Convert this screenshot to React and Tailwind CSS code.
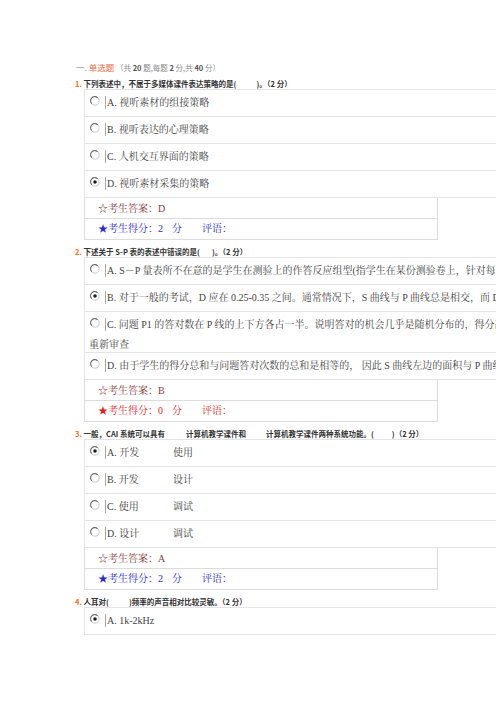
import React from "react";

const serif = { fontFamily: '"Liberation Serif", "Noto Serif CJK SC", "Noto Sans CJK SC", serif' };
const sans = { fontFamily: '"Noto Sans CJK SC", "Liberation Sans", sans-serif' };

function Radio({ checked }) {
  return (
    <svg width="10" height="10" viewBox="0 0 10 10" className="block">
      <circle cx="5" cy="5" r="4.1" fill="#fff" stroke="#c4c4c4" strokeWidth="0.9" />
      <path d="M1.8 7.6 A4.1 4.1 0 0 1 7.6 1.8" stroke="#6a6a6a" fill="none" strokeWidth="1.1" />
      {checked && <circle cx="5" cy="5" r="1.8" fill="#1f1f1f" />}
    </svg>
  );
}

function Option({ checked, children }) {
  return (
    <div
      className="pl-[4px] border-b border-[#e4e4e4] text-[10px] leading-[14px] text-[#444] whitespace-nowrap"
      style={serif}
    >
      <span className="inline-block h-[26px] w-0 align-middle" />
      <span className="inline-block align-middle ml-[1px] relative -top-[2px]">
        <Radio checked={checked} />
      </span>
      <span className="inline-block align-middle w-px h-[13px] bg-[#a8a8a8] ml-[5px] mr-px relative -top-[1px]" />
      <span className="align-middle">{children}</span>
    </div>
  );
}

function Label({ n, children }) {
  return (
    <div
      className="pl-[75px] pt-[7px] h-[17px] text-[7.5px] leading-[10px] font-bold text-[#333] whitespace-nowrap"
      style={sans}
    >
      <span className="text-[#ff6a1a]">{n}.</span> {children}
    </div>
  );
}

function Answer({ ans, score, scoreColor }) {
  return (
    <div className="ml-[84px] w-[354px] border-l border-r border-b border-[#dcdcdc] text-[10px]" style={serif}>
      <div className="h-[21px] leading-[21px] pl-[13px] border-b border-[#dcdcdc] text-[#8a3b3b]">
        ☆考生答案：{ans}
      </div>
      <div className={"h-[20px] leading-[20px] pl-[13px] " + scoreColor}>
        ★考生得分：{score}
        <span className="inline-block w-[9px]" />分
        <span className="inline-block w-[20px]" />评语：
      </div>
    </div>
  );
}

function Box({ children }) {
  return <div className="ml-[84px] border-l border-t border-[#e4e4e4]">{children}</div>;
}

export default function App() {
  return (
    <div className="w-[496px] h-[702px] overflow-hidden bg-white">
      <div className="w-[1000px] pt-[57px]">
        <div className="pl-[76px] h-[15px] leading-[15px] whitespace-nowrap" style={sans}>
          <span className="text-[8.5px] text-[#999]">一. </span>
          <span className="text-[8.5px] text-[#f2683c]">单选题</span>
          <span className="text-[7.5px] text-[#8a8a8a]">
            {" "}（共 <b className="text-[#555]">20</b> 题,每题 <b className="text-[#555]">2</b> 分,共{" "}
            <b className="text-[#555]">40</b> 分）
          </span>
        </div>

        <Label n="1">
          下列表述中，不属于多媒体课件表达策略的是(<span className="inline-block w-[20px]" />)。（2 分）
        </Label>
        <Box>
          <Option>A. 视听素材的组接策略</Option>
          <Option>B. 视听表达的心理策略</Option>
          <Option>C. 人机交互界面的策略</Option>
          <Option checked>D. 视听素材采集的策略</Option>
        </Box>
        <Answer ans="D" score="2" scoreColor="text-[#2b2bd6]" />

        <Label n="2">
          下述关于 S-P 表的表述中错误的是(<span className="inline-block w-[12px]" />)。（2 分）
        </Label>
        <Box>
          <Option>A. S－P 量表所不在意的是学生在测验上的作答反应组型(指学生在某份测验卷上，针对每一个试题的作答反应情形)</Option>
          <Option checked>B. 对于一般的考试，D 应在 0.25-0.35 之间。通常情况下，S 曲线与 P 曲线总是相交，而 D 值越大越好</Option>
          <div
            className="pl-[4px] border-b border-[#e4e4e4] text-[10px] leading-[14px] text-[#444] whitespace-nowrap"
            style={serif}
          >
            <span className="inline-block h-[26px] w-0 align-middle" />
            <span className="inline-block align-middle ml-[1px] relative -top-[2px]">
              <Radio />
            </span>
            <span className="inline-block align-middle w-px h-[13px] bg-[#a8a8a8] ml-[5px] mr-px relative -top-[1px]" />
            <span className="align-middle">
              C. 问题 P1 的答对数在 P 线的上下方各占一半。说明答对的机会几乎是随机分布的，得分高低与答对与否无关，该题需要
            </span>
            <br />
            <span>重新审查</span>
          </div>
          <Option>D. 由于学生的得分总和与问题答对次数的总和是相等的， 因此 S 曲线左边的面积与 P 曲线右边的面积相等</Option>
        </Box>
        <Answer ans="B" score="0" scoreColor="text-[#e81c1c]" />

        <Label n="3">
          一般，CAI 系统可以具有<span className="inline-block w-[21px]" />计算机教学课件和
          <span className="inline-block w-[20px]" />计算机教学课件两种系统功能。(
          <span className="inline-block w-[18px]" />)（2 分）
        </Label>
        <Box>
          <Option checked>
            <span className="inline-block w-[66px]">A. 开发</span>使用
          </Option>
          <Option>
            <span className="inline-block w-[66px]">B. 开发</span>设计
          </Option>
          <Option>
            <span className="inline-block w-[66px]">C. 使用</span>调试
          </Option>
          <Option>
            <span className="inline-block w-[66px]">D. 设计</span>调试
          </Option>
        </Box>
        <Answer ans="A" score="2" scoreColor="text-[#2b2bd6]" />

        <Label n="4">
          人耳对(<span className="inline-block w-[20px]" />)频率的声音相对比较灵敏。（2 分）
        </Label>
        <Box>
          <Option checked>A. 1k-2kHz</Option>
        </Box>
      </div>
    </div>
  );
}
